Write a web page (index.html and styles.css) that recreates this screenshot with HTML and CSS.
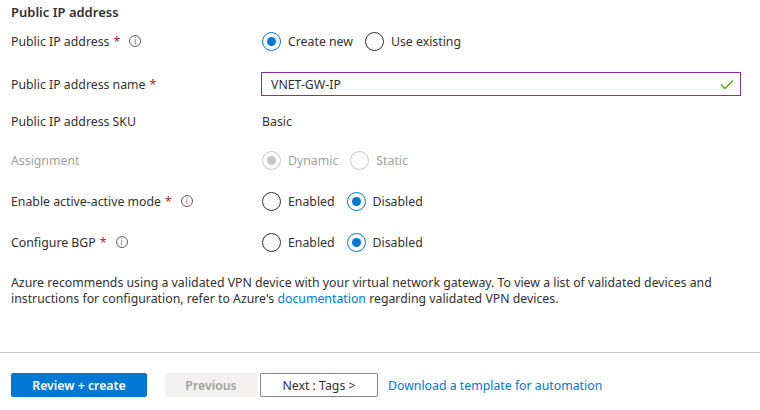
FILE: index.html
```html
<!DOCTYPE html>
<html lang="en">
<head>
    <meta charset="UTF-8">
    <title>Create virtual network gateway</title>
    <link rel="stylesheet" href="styles.css">
</head>
<body>
    <div class="page">
        <h2 class="section-title">Public IP address</h2>

        <div class="form-row row-ip">
            <div class="label">Public IP address <span class="req">*</span> <span class="info">i</span></div>
            <div class="control">
                <label class="choice"><span class="radio checked"></span>Create new</label>
                <label class="choice"><span class="radio"></span>Use existing</label>
            </div>
        </div>

        <div class="form-row row-name">
            <div class="label">Public IP address name <span class="req">*</span></div>
            <div class="control">
                <div class="textbox">
                    <span>VNET-GW-IP</span>
                    <svg class="check" width="14" height="11" viewBox="0 0 14 11">
                        <polyline points="1,5.5 5,9.5 13,1.5" fill="none" stroke="#57a300" stroke-width="1.3"/>
                    </svg>
                </div>
            </div>
        </div>

        <div class="form-row row-sku">
            <div class="label">Public IP address SKU</div>
            <div class="control">Basic</div>
        </div>

        <div class="form-row row-assign disabled">
            <div class="label">Assignment</div>
            <div class="control">
                <label class="choice"><span class="radio checked"></span>Dynamic</label>
                <label class="choice"><span class="radio"></span>Static</label>
            </div>
        </div>

        <div class="form-row row-active">
            <div class="label">Enable active-active mode <span class="req">*</span> <span class="info">i</span></div>
            <div class="control">
                <label class="choice"><span class="radio"></span>Enabled</label>
                <label class="choice"><span class="radio checked"></span>Disabled</label>
            </div>
        </div>

        <div class="form-row row-bgp">
            <div class="label">Configure BGP <span class="req">*</span> <span class="info">i</span></div>
            <div class="control">
                <label class="choice"><span class="radio"></span>Enabled</label>
                <label class="choice"><span class="radio checked"></span>Disabled</label>
            </div>
        </div>

        <p class="note">Azure recommends using a validated VPN device with your virtual network gateway. To view a list of validated devices and instructions for configuration, refer to Azure's <a href="#">documentation</a> regarding validated VPN devices.</p>
    </div>

    <div class="footer">
        <button class="btn primary">Review + create</button>
        <button class="btn previous" disabled>Previous</button>
        <button class="btn next">Next : Tags &gt;</button>
        <a class="footer-link" href="#">Download a template for automation</a>
    </div>
</body>
</html>
```

FILE: styles.css
```css
body {
    margin: 0;
    font-family: "Segoe UI", "Noto Sans", sans-serif;
    font-size: 12.3px;
    color: #323130;
    background: #fff;
}

.page {
    padding: 3px 11px 0 11px;
    height: 349px;
}

.section-title {
    margin: 0;
    font-size: 13px;
    font-weight: 600;
    line-height: 18px;
}

.form-row {
    display: grid;
    grid-template-columns: 251px 1fr;
    align-items: center;
    height: 24px;
}

.row-ip { margin-top: 8px; }
.row-name { margin-top: 19px; }
.row-sku { margin-top: 13px; }
.row-assign { margin-top: 15px; }
.row-active { margin-top: 17px; }
.row-bgp { margin-top: 17px; }

.label {
    display: flex;
    align-items: center;
    white-space: nowrap;
}

.req {
    color: #a4262c;
    margin-left: 4px;
}

.info {
    display: inline-flex;
    align-items: center;
    justify-content: center;
    box-sizing: border-box;
    width: 12px;
    height: 12px;
    border: 1px solid #605e5c;
    border-radius: 50%;
    font-size: 8px;
    line-height: 1;
    color: #605e5c;
    margin-left: 9px;
}

.control {
    display: flex;
    align-items: center;
}

.choice {
    display: flex;
    align-items: center;
    margin-right: 12px;
}

.radio {
    box-sizing: border-box;
    width: 19px;
    height: 19px;
    border: 1px solid #323130;
    border-radius: 50%;
    margin-right: 7px;
    display: flex;
    align-items: center;
    justify-content: center;
}

.radio.checked {
    border-color: #0078d4;
}

.radio.checked::after {
    content: "";
    width: 9px;
    height: 9px;
    border-radius: 50%;
    background: #0078d4;
}

.disabled {
    color: #a19f9d;
}

.disabled .radio {
    border-color: #c8c6c4;
}

.disabled .radio.checked::after {
    background: #c8c6c4;
}

.textbox {
    box-sizing: border-box;
    width: 480px;
    height: 24px;
    border: 1px solid #8a2da5;
    margin-left: -1px;
    padding: 0 6px 0 9px;
    display: flex;
    align-items: center;
    justify-content: space-between;
}

.note {
    margin: 21px 0 0 0;
    line-height: 16px;
    max-width: 712px;
}

.note a,
.footer-link {
    color: #0078d4;
    text-decoration: none;
}

.footer {
    border-top: 1px solid #c8c6c4;
    padding: 20px 11px 0 11px;
    display: flex;
    align-items: center;
}

.btn {
    font-family: inherit;
    font-size: 12.3px;
    height: 24px;
    box-sizing: border-box;
    border-radius: 2px;
    padding: 0;
}

.primary {
    width: 136px;
    background: #0078d4;
    border: 1px solid #0078d4;
    color: #fff;
    font-weight: 600;
}

.previous {
    width: 92px;
    margin-left: 18px;
    background: #f3f2f1;
    border: 1px solid #f3f2f1;
    color: #a19f9d;
    font-weight: 600;
}

.next {
    width: 118px;
    margin-left: 3px;
    background: #fff;
    border: 1px solid #8a8886;
    color: #323130;
}

.footer-link {
    margin-left: 10px;
}
```
